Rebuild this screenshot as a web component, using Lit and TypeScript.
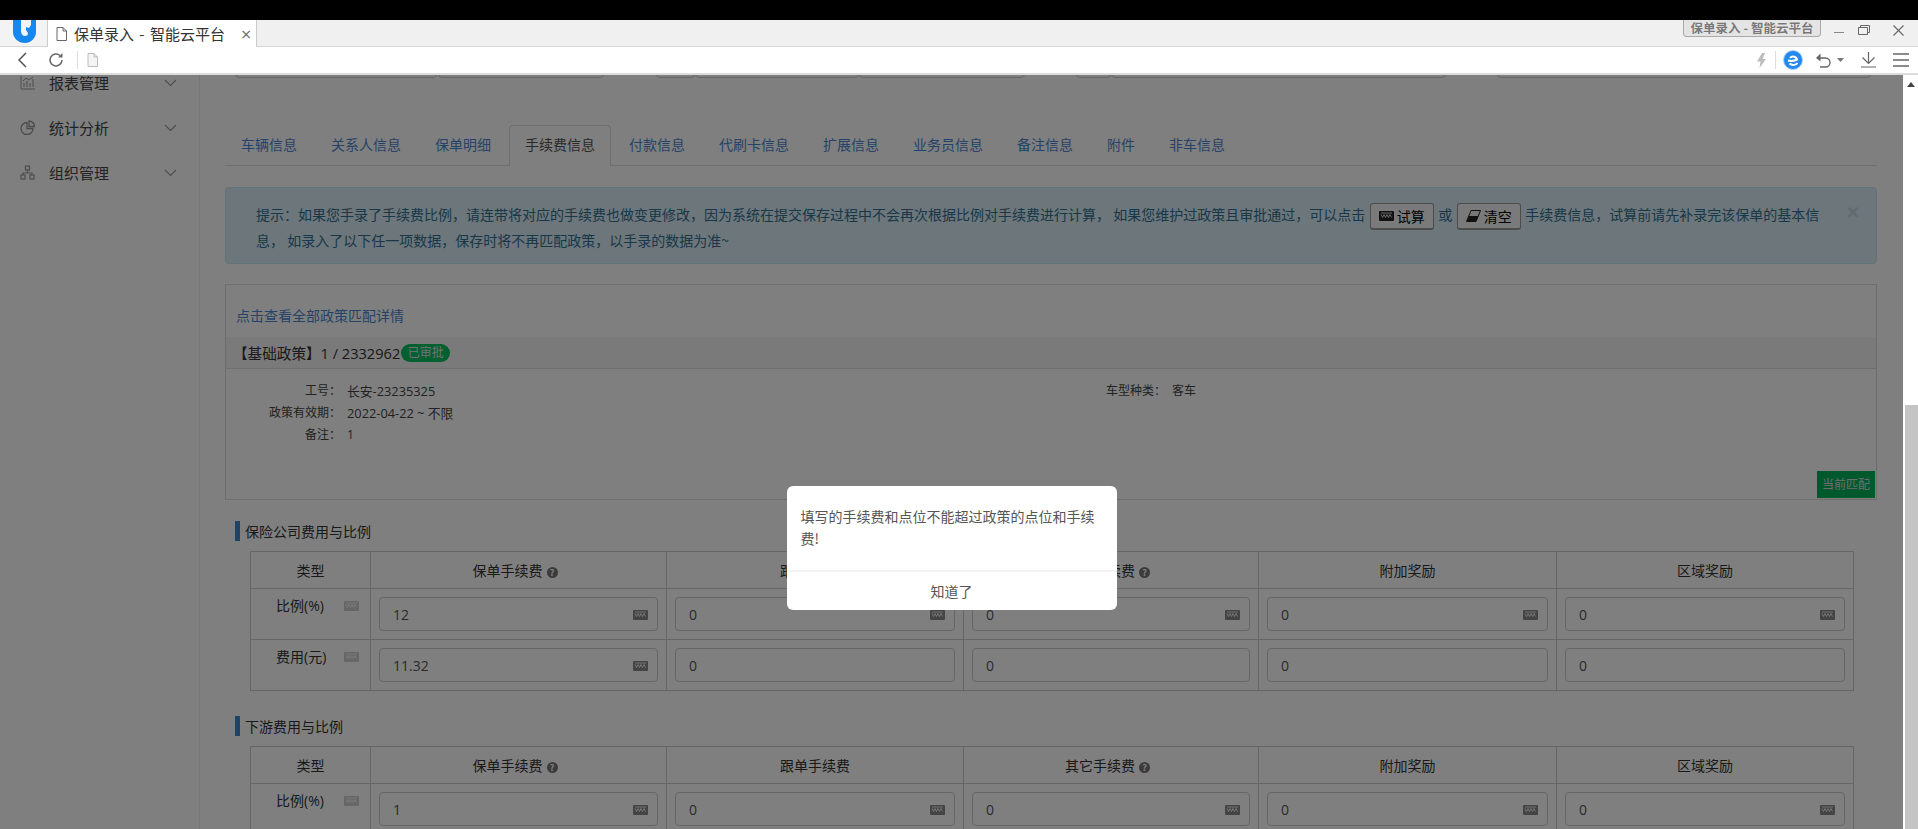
import { LitElement, html, css, svg } from 'lit';
import { customElement } from 'lit/decorators.js';

const docIcon = (w: number, h: number, stroke: string, fill: string) => html`<svg width=${w} height=${h} viewBox="0 0 11 14"><path d="M1 .5h6l3.500 3.500v9.500h-9.500z" fill=${fill} stroke=${stroke}/><path d="M7 .5v3.500h3.500" fill="none" stroke=${stroke}/></svg>`;

const chevron = html`<svg class="chev" width="13" height="8" viewBox="0 0 13 8"><path d="M1 1l5.500 5.500L12 1" fill="none" stroke="#999" stroke-width="1.100"/></svg>`;

const kbdIcon = (cls: string) => html`<svg class=${cls} width="15" height="10" viewBox="0 0 15 10"><rect width="15" height="10" rx="1" fill="currentColor"/><path d="M2 3.500l1.500 3 1.500-3 1.500 3 1.500-3 1.500 3 1.500-3 1.500 3" fill="none" stroke="#fff" stroke-width=".8"/><path d="M2 2h11" stroke="#fff" stroke-width=".8"/></svg>`;

const helpIcon = html`<span class="help">?</span>`;

const sideIcons = [
  svg`<path d="M1 1v13h14" fill="none" stroke="#999"/><path d="M4 12V8M7 12V6M10 12V8M13 12V4M3 6l3-3 3 2 4-3" fill="none" stroke="#999"/>`,
  svg`<path d="M7 2.500a6 6 0 1 0 6 6H7z" fill="none" stroke="#999" stroke-width="1.300"/><path d="M9 1a6 6 0 0 1 5.500 5.500H9z" fill="none" stroke="#999" stroke-width="1.300"/>`,
  svg`<rect x="5.500" y="1" width="4" height="4" fill="none" stroke="#999" stroke-width="1.200"/><rect x="1" y="10" width="4" height="4" fill="none" stroke="#999" stroke-width="1.200"/><rect x="10" y="10" width="4" height="4" fill="none" stroke="#999" stroke-width="1.200"/><path d="M7.500 5v3M3 10V8h9v2" fill="none" stroke="#999" stroke-width="1.200"/>`,
];

const menus = ['报表管理', '统计分析', '组织管理'];
const tabs = ['车辆信息', '关系人信息', '保单明细', '手续费信息', '付款信息', '代刷卡信息', '扩展信息', '业务员信息', '备注信息', '附件', '非车信息'];
const stubs = [[235, 202], [438, 166], [656, 39], [695, 164], [859, 166], [1076, 35], [1111, 335], [1497, 374]];

interface Cell { v: string; kbd: boolean }
const cells = (vals: string[], kbd: boolean[]): Cell[] => vals.map((v, i) => ({ v, kbd: kbd[i] }));

const feeTables = [
  {
    title: '保险公司费用与比例',
    rows: [
      { label: '比例(%)', cells: cells(['12', '0', '0', '0', '0'], [true, true, true, true, true]) },
      { label: '费用(元)', cells: cells(['11.32', '0', '0', '0', '0'], [true, false, false, false, false]) },
    ],
  },
  {
    title: '下游费用与比例',
    rows: [
      { label: '比例(%)', cells: cells(['1', '0', '0', '0', '0'], [true, true, true, true, true]) },
    ],
  },
];

@customElement('app-root')
export class AppRoot extends LitElement {
  static styles = css`
    :host {
      display: block;
      height: 829px;
      overflow: hidden;
      background: #fff;
      color: #333;
      font-family: "Open Sans", "Noto Sans CJK SC", sans-serif;
      font-size: 14px;
    }
    .top-black { height: 20px; background: #000; }

    /* browser chrome */
    .strip {
      height: 26px;
      background: #f0f0f0;
      border-bottom: 1px solid #d6d6d6;
      display: flex;
      align-items: stretch;
    }
    .logo { width: 47px; padding-left: 12px; box-sizing: border-box; background: #f3f3f3; }
    .logo svg { display: block; }
    .tab {
      width: 210px;
      height: 27px;
      box-sizing: border-box;
      background: #fff;
      border: 1px solid #ccc;
      border-width: 0 1px;
      display: flex;
      align-items: center;
      padding-left: 8px;
      font-size: 15px;
      color: #333;
      font-family: "Noto Sans CJK SC", sans-serif;
    }
    .tab .title { margin-left: 7px; flex: 1; white-space: nowrap; word-spacing: 2px; }
    .tab .x { color: #666; font-size: 14px; margin-right: 4px; font-family: "DejaVu Sans", sans-serif; }
    .strip-right { flex: 1; display: flex; justify-content: flex-end; align-items: flex-start; }
    .preview {
      height: 17px;
      width: 138px;
      box-sizing: border-box;
      border: 1px solid #aaa;
      border-top: 0;
      border-radius: 0 0 4px 4px;
      background: #e4e4e4;
      color: #777;
      font-size: 12.500px;
      line-height: 15px;
      text-align: center;
      white-space: nowrap;
      font-family: "Noto Sans CJK SC", sans-serif;
      font-weight: 700;
      text-shadow: 0 0 1px #fff;
      margin-right: 13px;
    }
    .win { display: flex; gap: 14px; margin-right: 14px; padding-top: 5px; }
    .win svg { display: block; }

    .toolbar {
      height: 26px;
      background: #fff;
      border-bottom: 2px solid #dcdcdc;
      display: flex;
      align-items: center;
      padding: 0 9px 0 17px;
    }
    .toolbar svg { display: block; }
    .tool-sep { width: 1px; height: 18px; background: #ddd; }
    .spacer { flex: 1; }

    /* page */
    .viewport { display: flex; height: 754px; overflow: hidden; }
    .page { position: relative; flex: 1; min-width: 0; display: flex; overflow: hidden; }
    .scroll { width: 15px; background: #fff; position: relative; display: flex; flex-direction: column; align-items: flex-end; }
    .scroll .up { width: 0; height: 0; border: 4px solid transparent; border-top: 0; border-bottom: 5px solid #444; margin: 7px 3px 0 0; }
    .scroll .thumb { width: 13px; flex: 1; background: #c4c4c4; margin-top: 318px; }

    .side { width: 199px; border-right: 1px solid #eee; flex: none; }
    .side-list { margin-top: -15px; }
    .side-item { height: 45px; display: flex; align-items: center; padding-left: 20px; padding-right: 22px; font-size: 15px; color: #444; font-family: "Noto Sans CJK SC", sans-serif; }
    .side-item .name { margin-left: 14px; flex: 1; }

    .main { flex: 1; min-width: 0; padding: 0 26px 0 25px; }
    .stubs { position: relative; height: 3px; }
    .stub { position: absolute; top: -10px; height: 13px; border: 1px solid #ccc; border-radius: 0 0 4px 4px; box-sizing: border-box; }

    .tabs { display: flex; margin-top: 47px; border-bottom: 1px solid #ddd; height: 40px; }
    .tabs a {
      padding: 0 15px;
      border: 1px solid transparent;
      margin-right: 2px;
      color: #4a86d0;
      line-height: 36px;
      height: 40px;
      box-sizing: border-box;
      white-space: nowrap;
      font-family: "Noto Sans CJK SC", sans-serif;
    }
    .tabs a.on {
      color: #555;
      background: #fff;
      border-color: #ddd #ddd #fff;
      border-radius: 4px 4px 0 0;
      height: 41px;
    }

    .alert {
      margin-top: 21px;
      position: relative;
      background: #d9edf7;
      border: 1px solid #bce8f1;
      border-radius: 4px;
      color: #31708f;
      padding: 15px 50px 14px 30px;
      line-height: 20px;
      height: 77px;
      box-sizing: border-box;
      font-family: "Noto Sans CJK SC", sans-serif;
    }
    .alert .close { position: absolute; right: 17px; top: 9px; color: #c0d6df; font-size: 21px; font-weight: 700; line-height: 30px; font-family: "Liberation Sans", sans-serif; }
    .btn {
      display: inline-flex;
      align-items: center;
      justify-content: center;
      gap: 3px;
      width: 64px;
      height: 27px;
      box-sizing: border-box;
      vertical-align: middle;
      margin: 0 4.500px;
      background: #f4f4f4;
      border: 1px solid #999;
      border-bottom-width: 2px;
      border-radius: 3px;
      color: #000;
    }
    .btn svg { display: block; color: #222; }

    .policy { position: relative; margin-top: 20px; border: 1px solid #ddd; height: 216px; box-sizing: border-box; }
    .policy-link { display: block; padding: 20px 0 0 10px; line-height: 20px; color: #4a86d0; font-family: "Noto Sans CJK SC", sans-serif; }
    .policy-head {
      margin-top: 12px;
      height: 32px;
      box-sizing: border-box;
      background: #f5f5f5;
      border-bottom: 1px solid #ddd;
      display: flex;
      align-items: center;
      padding-left: 7px;
      color: #333;
      font-size: 14.600px;
      white-space: nowrap;
    }
    .pill { background: #00c060; color: #e4e4e4; font-size: 12px; border-radius: 9px; width: 49px; height: 18px; line-height: 18px; text-align: center; margin-left: 1px; }
    .policy-body { display: grid; grid-template-columns: 1fr 1fr; padding-top: 11px; font-size: 12px; }
    .kv { display: flex; height: 22px; line-height: 22px; color: #444; }
    .kv .k { width: 115px; text-align: right; margin-right: 6px; }
    .kv .v { font-size: 12.800px; }
    .match { position: absolute; right: 1px; bottom: 1px; width: 58px; height: 27px; line-height: 27px; text-align: center; background: #00b05a; color: #ddd; font-size: 12px; }

    .sec { padding-left: 10px; margin-top: 21px; }
    .sec + .sec { margin-top: 25px; }
    .sec-title { border-left: 5px solid #3f86c8; padding-left: 5px; height: 20px; line-height: 22px; color: #333; }
    table { border-collapse: collapse; table-layout: fixed; width: 1603px; margin: 10px 0 0 15px; }
    th, td { border: 1px solid #ccc; padding: 0; }
    th { height: 36px; font-weight: 400; color: #333; text-align: center; font-family: "Noto Sans CJK SC", sans-serif; }
    td { height: 51px; padding: 0 8px; box-sizing: border-box; vertical-align: middle; }
    td.label { padding: 0; vertical-align: top; }
    .label-in { display: flex; align-items: center; padding: 7px 0 0 25px; gap: 17px; color: #333; line-height: 20px; }
    .label-in .txt { width: 51px; white-space: nowrap; }
    .label-in svg { color: #ccc; display: block; }
    .input {
      height: 34px;
      box-sizing: border-box;
      border: 1px solid #ccc;
      border-radius: 4px;
      background: #fff;
      display: flex;
      align-items: center;
      justify-content: space-between;
      padding: 0 9px 0 13px;
      color: #555;
    }
    .input svg { color: #888; display: block; margin-top: 2px; }
    .help {
      display: inline-block;
      width: 11px;
      height: 11px;
      border-radius: 50%;
      background: #777;
      color: #fff;
      font-size: 9px;
      line-height: 11px;
      font-weight: 700;
      text-align: center;
      margin: 0 7px 0 4px;
      vertical-align: 0;
    }

    .overlay {
      position: absolute;
      inset: 0;
      background: rgba(0, 0, 0, .5);
      display: flex;
      justify-content: center;
      align-items: flex-start;
      padding-top: 411px;
    }
    .modal { width: 330px; height: 124px; background: #fff; border-radius: 6px; color: #555; box-sizing: border-box; font-family: "Noto Sans CJK SC", sans-serif; }
    .modal-text { height: 86px; box-sizing: border-box; padding: 19px 14px 0; line-height: 22px; border-bottom: 2px solid #f3f3f3; }
    .modal-btn { text-align: center; line-height: 38px; }
  `;

  private renderChrome() {
    return html`
      <div class="strip">
        <div class="logo">
          <svg width="24" height="23" viewBox="0 0 24 23">
            <path d="M1 0h8v11c0 3 2 5 4 5 2 0 3-1 3-3l-2-3V7l3 1 2-3v-5h5v12c0 6-5 11-11 11C6 23 1 18 1 12z" fill="#1787f0"/>
          </svg>
        </div>
        <div class="tab">
          ${docIcon(11, 14, '#666', '#fff')}
          <span class="title">保单录入 - 智能云平台</span>
          <span class="x">×</span>
        </div>
        <div class="strip-right">
          <div class="preview">保单录入 - 智能云平台</div>
          <div class="win">
            <svg width="10" height="10" viewBox="0 0 10 10"><path d="M0 7.500h10" stroke="#888"/></svg>
            <svg width="12" height="10" viewBox="0 0 12 10"><path d="M.5 2.500h9v7h-9zM2.500 2.500v-2h9v7h-2" fill="none" stroke="#666"/></svg>
            <svg width="11" height="11" viewBox="0 0 11 11" style="margin-left:9px"><path d="M.5.500l10 10M10.500.500l-10 10" stroke="#666" stroke-width="1.100"/></svg>
          </div>
        </div>
      </div>
      <div class="toolbar">
        <svg width="10" height="16" viewBox="0 0 10 16"><path d="M9 1L2 8l7 7" fill="none" stroke="#555" stroke-width="1.500"/></svg>
        <svg style="margin-left:21px" width="16" height="16" viewBox="0 0 16 16"><path d="M14 8a6 6 0 1 1-2-4.500" fill="none" stroke="#666" stroke-width="1.500"/><path d="M14.500 1v4.500H10z" fill="#666"/></svg>
        <div class="tool-sep" style="margin-left:13px"></div>
        <span style="margin-left:9px">${docIcon(11, 14, '#bbb', '#f4f4f4')}</span>
        <div class="spacer"></div>
        <svg width="9" height="15" viewBox="0 0 9 15"><path d="M5 0L0 8.500h3.500L2.500 15 9 6H5.500L8 0z" fill="#bdbdbd"/></svg>
        <div class="tool-sep" style="margin-left:9px"></div>
        <svg style="margin-left:7px" width="20" height="20" viewBox="0 0 20 20"><circle cx="10" cy="10" r="9.500" fill="#2488ef" stroke="#a9d3fb"/><path d="M5 10.500c2 .5 6 .5 9-1-.5-3-5-4-7-1.500M14.500 13c-2 2.500-6 2.500-8 .5" fill="none" stroke="#fff" stroke-width="2"/></svg>
        <svg style="margin-left:13px" width="15" height="15" viewBox="0 0 15 15"><path d="M2 5h7.500a4.500 4.500 0 0 1 0 9H4" fill="none" stroke="#666" stroke-width="1.400"/><path d="M5 0v9L0 5z" fill="#666" transform="translate(0 .5) scale(.9)"/></svg>
        <svg style="margin-left:6px" width="7" height="4" viewBox="0 0 7 4"><path d="M0 0h7L3.500 4z" fill="#777"/></svg>
        <svg style="margin-left:17px" width="15" height="16" viewBox="0 0 15 16"><path d="M7.500 0v11M1.500 5.500l6 6 6-6M0 15h15" fill="none" stroke="#666" stroke-width="1.200"/></svg>
        <svg style="margin-left:17px" width="16" height="14" viewBox="0 0 16 14"><path d="M0 1h16M0 7h16M0 13h16" stroke="#666" stroke-width="1.300"/></svg>
      </div>
    `;
  }

  private renderPolicy() {
    return html`
      <div class="policy">
        <a class="policy-link">点击查看全部政策匹配详情</a>
        <div class="policy-head">【基础政策】1 / 2332962<span class="pill">已审批</span></div>
        <div class="policy-body">
          <div class="kv"><span class="k">工号：</span><span class="v">长安-23235325</span></div>
          <div class="kv"><span class="k">车型种类：</span><span>客车</span></div>
          <div class="kv"><span class="k">政策有效期：</span><span class="v">2022-04-22 ~ 不限</span></div>
          <div></div>
          <div class="kv"><span class="k">备注：</span><span>1</span></div>
        </div>
        <div class="match">当前匹配</div>
      </div>
    `;
  }

  private renderTable(t: (typeof feeTables)[number]) {
    return html`
      <div class="sec">
        <div class="sec-title">${t.title}</div>
        <table>
          <colgroup>
            ${[120, 296, 297, 295, 298, 297].map((w) => html`<col style="width:${w}px" />`)}
          </colgroup>
          <tr>
            <th>类型</th><th>保单手续费${helpIcon}</th><th>跟单手续费</th><th>其它手续费${helpIcon}</th><th>附加奖励</th><th>区域奖励</th>
          </tr>
          ${t.rows.map((r) => html`
            <tr>
              <td class="label"><div class="label-in"><span class="txt">${r.label}</span>${kbdIcon('')}</div></td>
              ${r.cells.map((c) => html`<td><div class="input"><span>${c.v}</span>${c.kbd ? kbdIcon('') : ''}</div></td>`)}
            </tr>
          `)}
        </table>
      </div>
    `;
  }

  render() {
    return html`
      <div class="top-black"></div>
      ${this.renderChrome()}
      <div class="viewport">
        <div class="page">
          <div class="side">
            <div class="side-list">
              ${menus.map((m, i) => html`
                <div class="side-item">
                  <svg width="15" height="15" viewBox="0 0 15 15">${sideIcons[i]}</svg>
                  <span class="name">${m}</span>
                  ${chevron}
                </div>
              `)}
            </div>
          </div>
          <div class="main">
            <div class="stubs">
              ${stubs.map(([x, w]) => html`<div class="stub" style="left:${x - 225}px;width:${w}px"></div>`)}
            </div>
            <div class="tabs">
              ${tabs.map((t) => html`<a class=${t === '手续费信息' ? 'on' : ''}>${t}</a>`)}
            </div>
            <div class="alert">
              提示：如果您手录了手续费比例，请连带将对应的手续费也做变更修改，因为系统在提交保存过程中不会再次根据比例对手续费进行计算， 如果您维护过政策且审批通过，可以点击<span class="btn">${kbdIcon('')}试算</span>或<span class="btn"><svg width="15" height="12" viewBox="0 0 15 12"><path d="M5 .5h9.500L10 11.500H.5z" fill="#eee" stroke="#222"/><path d="M3 6h9.500L10 11.500H.5z" fill="#222"/></svg>清空</span>手续费信息，试算前请先补录完该保单的基本信息， 如录入了以下任一项数据，保存时将不再匹配政策，以手录的数据为准~
              <span class="close">×</span>
            </div>
            ${this.renderPolicy()}
            ${feeTables.map((t) => this.renderTable(t))}
          </div>
          <div class="overlay">
            <div class="modal">
              <div class="modal-text">填写的手续费和点位不能超过政策的点位和手续费!</div>
              <div class="modal-btn">知道了</div>
            </div>
          </div>
        </div>
        <div class="scroll"><div class="up"></div><div class="thumb"></div></div>
      </div>
    `;
  }
}
